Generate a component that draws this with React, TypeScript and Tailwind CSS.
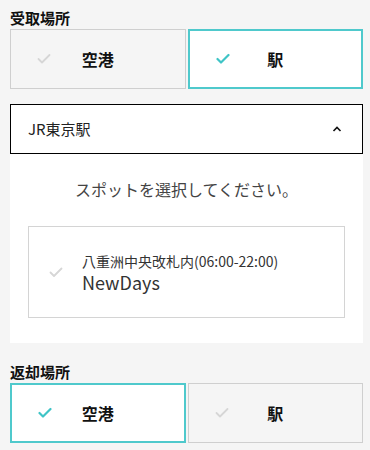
import React from "react";

const font = { fontFamily: '"Noto Sans CJK JP", "Noto Sans", sans-serif' };

function Check({ active }: { active: boolean }) {
  return (
    <svg
      width="14"
      height="11"
      viewBox="0 0 14 11"
      fill="none"
      stroke={active ? "#3fc4c6" : "#d6d6d6"}
      strokeWidth={active ? 2.2 : 1.8}
      strokeLinecap="round"
      strokeLinejoin="round"
    >
      <polyline points="1.5,5.5 5,9 12.5,1.5" />
    </svg>
  );
}

function Toggle({ label, active }: { label: string; active: boolean }) {
  return (
    <button
      className={
        active
          ? "relative flex h-[60px] items-center justify-center border-2 border-[#4fc9cc] bg-white"
          : "relative flex h-[60px] items-center justify-center border border-[#cfcfcf] bg-[#f5f5f5]"
      }
    >
      <span className="absolute left-[26px] top-1/2 -translate-y-1/2">
        <Check active={active} />
      </span>
      <span className="text-[16px] font-bold text-[#111]">{label}</span>
    </button>
  );
}

function Section({ title, active }: { title: string; active: number }) {
  return (
    <div>
      <div className="h-[20px] text-[15px] font-bold leading-[20px] text-[#111]">{title}</div>
      <div className="mt-[1px] grid grid-cols-2 gap-[2px]">
        <Toggle label="空港" active={active === 0} />
        <Toggle label="駅" active={active === 1} />
      </div>
    </div>
  );
}

export default function App() {
  return (
    <div className="h-[450px] w-[370px] overflow-hidden bg-[#f5f5f5] pl-[10px] pr-[7px] pt-[8px]" style={font}>
      <Section title="受取場所" active={1} />

      <div className="mt-[15px] flex h-[50px] items-center justify-between border border-black bg-white pl-[17px] pr-[20px]">
        <span className="text-[15px] text-[#222]">JR東京駅</span>
        <svg width="10" height="6" viewBox="0 0 10 6" fill="none" stroke="#111" strokeWidth="1.6">
          <polyline points="1.5,5 5,1.5 8.5,5" />
        </svg>
      </div>

      <div className="bg-white px-[18px] pb-[25px] pt-[23px]">
        <p className="text-center text-[16px] leading-[24px] text-[#444]">スポットを選択してください。</p>
        <div className="mt-[25px] flex h-[92px] items-center border border-[#d4d4d4] bg-white pl-[20px]">
          <Check active={false} />
          <div className="ml-[19px] mt-[2px] flex flex-col">
            <span className="text-[14px] leading-[19px] text-[#333]">八重洲中央改札内(06:00-22:00)</span>
            <span className="text-[18px] leading-[23px] text-[#333]">NewDays</span>
          </div>
        </div>
      </div>

      <div className="mt-[19px]">
        <Section title="返却場所" active={0} />
      </div>
    </div>
  );
}
